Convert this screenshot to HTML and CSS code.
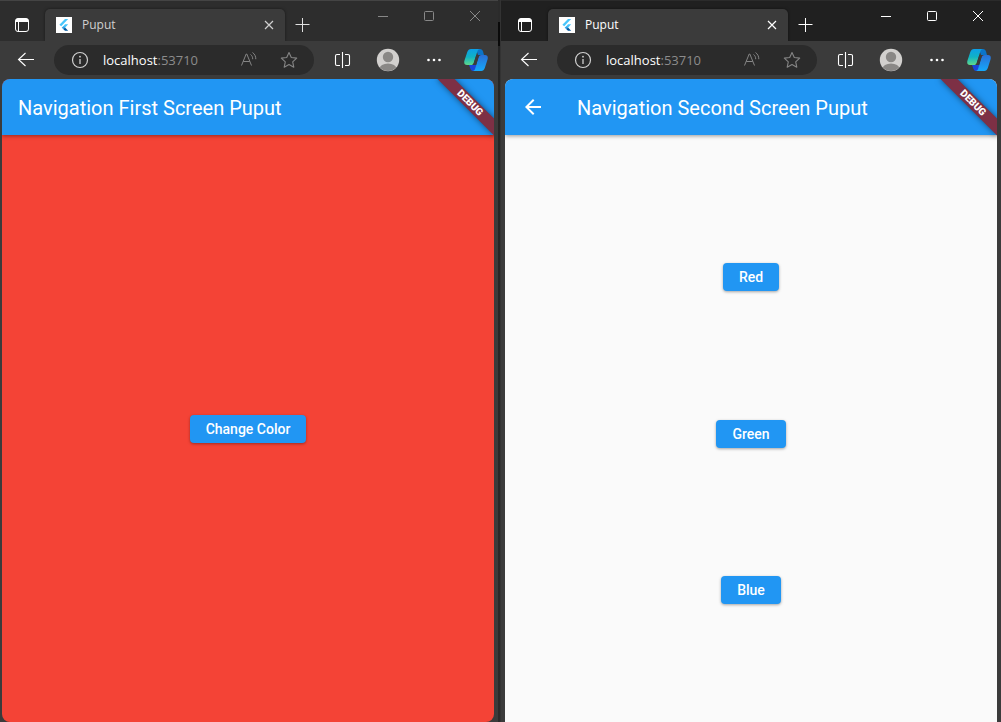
FILE: index.html
```html
<!DOCTYPE html>
<html lang="en">
<head>
<meta charset="utf-8">
<title>Puput</title>
<link rel="stylesheet" href="styles.css">
</head>
<body>
<svg class="sprite" aria-hidden="true">
  <defs>
    <linearGradient id="cp-left" x1="0" y1="0" x2="0" y2="1">
      <stop offset="0" stop-color="#0c9fe8"/><stop offset=".5" stop-color="#10b3c4"/><stop offset="1" stop-color="#5fd98a"/>
    </linearGradient>
    <linearGradient id="cp-right" x1="0" y1="0" x2="0" y2="1">
      <stop offset="0" stop-color="#2a6fd6"/><stop offset="1" stop-color="#14a9fb"/>
    </linearGradient>
    <symbol id="i-workspace" viewBox="0 0 16 16">
      <rect x="1.5" y="1.5" width="13" height="13" rx="2.5" fill="none" stroke="currentColor"/>
      <path d="M1.5 5V3.5a2 2 0 0 1 2-2h9a2 2 0 0 1 2 2V5z" fill="currentColor"/>
      <path d="M4.5 5v9.500" fill="none" stroke="currentColor"/>
    </symbol>
    <symbol id="i-flutter" viewBox="0 0 16 16">
      <path fill="#fff" d="M0 0h16v16H0z"/>
      <path fill="#47c5fb" d="M9 2h3.200L5.200 9.200 3.400 7.700z"/>
      <path fill="#47c5fb" d="M9 7.300h3.200L9 10.700 7.300 9.300z"/>
      <path fill="#2aa3e8" d="M5.700 10.700l1.700-1.600L9.200 10.700l-1.700 1.600z"/>
      <path fill="#00569e" d="M7.400 12.200L9 10.600l3.200 3.200H9z"/>
    </symbol>
    <symbol id="i-close" viewBox="0 0 12 12">
      <path d="M2 2l8 8M10 2l-8 8" fill="none" stroke="currentColor" stroke-width="1.200"/>
    </symbol>
    <symbol id="i-plus" viewBox="0 0 16 16">
      <path d="M8.500 1v14M1.500 7.500h14" fill="none" stroke="currentColor"/>
    </symbol>
    <symbol id="i-min" viewBox="0 0 12 12"><path d="M1 6.500h10" fill="none" stroke="currentColor"/></symbol>
    <symbol id="i-max" viewBox="0 0 12 12"><rect x="1.500" y="1.500" width="9" height="9" rx="1" fill="none" stroke="currentColor"/></symbol>
    <symbol id="i-exit" viewBox="0 0 12 12"><path d="M1 1l10 10M11 1L1 11" fill="none" stroke="currentColor"/></symbol>
    <symbol id="i-back" viewBox="0 0 18 16">
      <path d="M8.500 1L1.500 7.500l7 6.500M1.500 7.500H17" fill="none" stroke="currentColor" stroke-width="1.100"/>
    </symbol>
    <symbol id="i-info" viewBox="0 0 18 18">
      <circle cx="9" cy="9" r="7.500" fill="none" stroke="currentColor" stroke-width="1.200"/>
      <path d="M9 8v5" stroke="currentColor" stroke-width="1.300"/><circle cx="9" cy="5.700" r=".9" fill="currentColor"/>
    </symbol>
    <symbol id="i-read" viewBox="0 0 20 20">
      <path d="M2.500 15.500L7.200 4h.6l4.700 11.500M4.200 11.500h6.600M11.500 4.500c1.500 1 2.300 2.700 2.200 4.700M13.500 2.500c2.200 1.500 3.400 4 3.300 6.700" fill="none" stroke="currentColor"/>
    </symbol>
    <symbol id="i-star" viewBox="0 0 20 20">
      <path d="M10 2.500l2.300 5 5.400.6-4 3.700 1.100 5.400L10 14.500l-4.800 2.700 1.100-5.400-4-3.700 5.400-.6z" fill="none" stroke="currentColor" stroke-width="1.100" stroke-linejoin="round"/>
    </symbol>
    <symbol id="i-split" viewBox="0 0 17 16">
      <path d="M6 2.500H3A1.500 1.500 0 0 0 1.500 4v8A1.500 1.500 0 0 0 3 13.500h3M11 2.500h3A1.500 1.500 0 0 1 15.500 4v8a1.500 1.500 0 0 1-1.500 1.500h-3M8.500 0v16" fill="none" stroke="currentColor" stroke-width="1.100"/>
    </symbol>
    <symbol id="i-avatar" viewBox="0 0 24 24">
      <clipPath id="av-clip"><circle cx="12" cy="12" r="11"/></clipPath>
      <circle cx="12" cy="12" r="11.200" fill="#d2d0ce"/>
      <g clip-path="url(#av-clip)" fill="#8a8886"><circle cx="12" cy="9" r="5.200"/><ellipse cx="12" cy="21" rx="8.500" ry="5.500"/></g>
    </symbol>
    <symbol id="i-more" viewBox="0 0 16 16">
      <g fill="currentColor"><circle cx="2.500" cy="8" r="1.300"/><circle cx="8" cy="8" r="1.300"/><circle cx="13.500" cy="8" r="1.300"/></g>
    </symbol>
    <symbol id="i-copilot" viewBox="0 0 24 24">
      <path fill="#0b74c9" d="M12 1h4c1.600 0 2.500 1 3 2.500L20 7h-6z"/>
      <path fill="#1a45d8" d="M5 17h7l1 6H9c-1.500 0-2.200-1-2.600-2.200z"/>
      <path fill="url(#cp-left)" d="M7 1h9c-1.500 0-2.300 1-2.700 2.500L9.700 15c-.5 1.500-1.300 2-2.700 2H3c-2.400 0-3.200-1.700-2.600-4.200L3.300 4C4.100 2 5.200 1 7 1z"/>
      <path fill="url(#cp-right)" d="M17.500 7H21c2.400 0 3.200 1.700 2.600 4.200L20.800 20c-.8 2-1.700 3-3.500 3H8.500c1.500 0 2.300-1 2.700-2.500L14.500 9.500C15 7.800 16 7 17.500 7z"/>
      <path fill="#3b3b3b" d="M12.400 7h3.400c-.7.600-1.100 1.300-1.400 2.500L12 17H8.500c.6-.4 1-1 1.200-2z"/>
    </symbol>
    <symbol id="i-arrow" viewBox="0 0 24 24">
      <path fill="currentColor" d="M20 11H7.830l5.590-5.590L12 4l-8 8 8 8 1.410-1.410L7.830 13H20v-2z"/>
    </symbol>
  </defs>
</svg>
<div class="desktop">
  <section class="window window-inactive">
    <div class="tabstrip">
      <button class="workspace" aria-label="Workspaces"><svg class="s16"><use href="#i-workspace"/></svg></button>
      <div class="tab">
        <svg class="s16"><use href="#i-flutter"/></svg>
        <span class="tab-title">Puput</span>
        <button aria-label="Close tab"><svg class="s12"><use href="#i-close"/></svg></button>
      </div>
      <button class="new-tab" aria-label="New tab"><svg class="s16"><use href="#i-plus"/></svg></button>
      <div class="captions">
        <button aria-label="Minimize"><svg class="s12"><use href="#i-min"/></svg></button>
        <button aria-label="Maximize"><svg class="s12"><use href="#i-max"/></svg></button>
        <button aria-label="Close"><svg class="s12"><use href="#i-exit"/></svg></button>
      </div>
    </div>
    <div class="toolbar">
      <button class="back" aria-label="Back"><svg class="s18"><use href="#i-back"/></svg></button>
      <div class="address">
        <svg class="s18 info"><use href="#i-info"/></svg>
        <span class="url"><b>localhost</b>:53710</span>
        <button aria-label="Read aloud"><svg class="s20"><use href="#i-read"/></svg></button>
        <button aria-label="Add to favorites"><svg class="s20"><use href="#i-star"/></svg></button>
      </div>
      <div class="tools">
        <button aria-label="Split screen"><svg class="split"><use href="#i-split"/></svg></button>
        <button aria-label="Profile"><svg class="s24"><use href="#i-avatar"/></svg></button>
        <button aria-label="More"><svg class="s16"><use href="#i-more"/></svg></button>
        <button class="copilot" aria-label="Copilot"><svg class="s24"><use href="#i-copilot"/></svg></button>
      </div>
    </div>
    <main class="page page-red">
      <header class="appbar"><h1>Navigation First Screen Puput</h1></header>
      <div class="content">
        <button class="raised">Change Color</button>
      </div>
      <div class="debug">DEBUG</div>
    </main>
  </section>
  <div class="seam"></div>
  <section class="window window-active">
    <div class="tabstrip">
      <button class="workspace" aria-label="Workspaces"><svg class="s16"><use href="#i-workspace"/></svg></button>
      <div class="tab">
        <svg class="s16"><use href="#i-flutter"/></svg>
        <span class="tab-title">Puput</span>
        <button aria-label="Close tab"><svg class="s12"><use href="#i-close"/></svg></button>
      </div>
      <button class="new-tab" aria-label="New tab"><svg class="s16"><use href="#i-plus"/></svg></button>
      <div class="captions">
        <button aria-label="Minimize"><svg class="s12"><use href="#i-min"/></svg></button>
        <button aria-label="Maximize"><svg class="s12"><use href="#i-max"/></svg></button>
        <button aria-label="Close"><svg class="s12"><use href="#i-exit"/></svg></button>
      </div>
    </div>
    <div class="toolbar">
      <button class="back" aria-label="Back"><svg class="s18"><use href="#i-back"/></svg></button>
      <div class="address">
        <svg class="s18 info"><use href="#i-info"/></svg>
        <span class="url"><b>localhost</b>:53710</span>
        <button aria-label="Read aloud"><svg class="s20"><use href="#i-read"/></svg></button>
        <button aria-label="Add to favorites"><svg class="s20"><use href="#i-star"/></svg></button>
      </div>
      <div class="tools">
        <button aria-label="Split screen"><svg class="split"><use href="#i-split"/></svg></button>
        <button aria-label="Profile"><svg class="s24"><use href="#i-avatar"/></svg></button>
        <button aria-label="More"><svg class="s16"><use href="#i-more"/></svg></button>
        <button class="copilot" aria-label="Copilot"><svg class="s24"><use href="#i-copilot"/></svg></button>
      </div>
    </div>
    <main class="page page-light">
      <header class="appbar">
        <button class="nav-back" aria-label="Back"><svg class="s24"><use href="#i-arrow"/></svg></button>
        <h1>Navigation Second Screen Puput</h1>
      </header>
      <div class="content">
        <button class="raised">Red</button>
        <button class="raised">Green</button>
        <button class="raised">Blue</button>
      </div>
      <div class="debug">DEBUG</div>
    </main>
  </section>
</div>
</body>
</html>
```
FILE: styles.css
```css
* { box-sizing: border-box; }
body { margin: 0; background: #3b3b3b; }
button { border: 0; padding: 0; margin: 0; background: none; color: inherit; font: inherit; cursor: pointer; }
svg { display: block; flex: none; }
.sprite { position: absolute; width: 0; height: 0; }
.s12 { width: 12px; height: 12px; }
.s16 { width: 16px; height: 16px; }
.s18 { width: 18px; height: 18px; }
.s20 { width: 20px; height: 20px; }
.s24 { width: 24px; height: 24px; }
.split { width: 17px; height: 16px; }

.desktop { display: grid; grid-template-columns: 498fr 3px 500fr; height: 100vh; overflow: hidden; }
.seam { border-right: 1px solid #333; background: linear-gradient(#2b2b2b 22px, #0a0a0a 22px, #0a0a0a 46px, #252525 46px, #2b2b2b); }

.window { --edge: 4px; display: flex; flex-direction: column; min-width: 0; min-height: 0; background: #3b3b3b; font-family: "Open Sans", "Noto Sans", sans-serif; color: #fff; }
.window-inactive { --edge: 2px; }

.tabstrip { display: flex; flex: none; height: 41px; padding-left: var(--edge); background: #202020; border-top: 1px solid #2b2b2b; }
.window-inactive .tabstrip { background: #2d2d2d; border-top-color: #444; }
.workspace { display: grid; place-items: center; width: 40px; padding-top: 8px; margin-right: 3px; }
.tab { display: flex; align-items: center; gap: 10px; width: 240px; height: 32px; margin-top: 8px; padding: 0 10px 0 11px; border-radius: 5px 5px 0 0; background: #3b3b3b; box-shadow: 0 0 3px rgba(0, 0, 0, .5); clip-path: inset(-4px -4px 0 -4px); }
.tab-title { flex: 1; font-size: 12px; line-height: 16px; }
.window-inactive .tab { color: #d0d0d0; }
.new-tab { display: grid; place-items: center; width: 34px; padding-top: 8px; }
.window-inactive .new-tab { color: #e0e0e0; }
.captions { display: flex; margin-left: auto; height: 30px; }
.captions button { display: grid; place-items: center; width: 46px; }
.window-inactive .captions { color: #888; }

.toolbar { display: flex; flex: none; align-items: center; height: 38px; padding: 0 4px 0 var(--edge); }
.back { display: grid; place-items: center; width: 48px; height: 30px; margin-right: 4px; }
.address { display: flex; flex: 1; align-items: center; min-width: 0; height: 30px; padding: 0 15px 0 17px; border-radius: 15px; background: #2b2b2b; color: #858585; }
.info { margin-right: 14px; color: #d0d0d0; }
.url { flex: 1; font-size: 13px; line-height: 20px; color: #8c8c8c; }
.url b { font-weight: 400; color: #fff; }
.address button + button { margin-left: 20px; }
.tools { display: flex; margin-left: 5px; }
.tools button { display: grid; place-items: center; width: 46px; height: 30px; }
.tools .copilot { width: 37px; }

.page { position: relative; display: flex; flex: 1; flex-direction: column; min-height: 0; margin: 0 4px 0 var(--edge); overflow: hidden; font-family: Roboto, "Liberation Sans", sans-serif; }
.page-red { border-radius: 8px; background: #f44336; }
.page-light { margin-bottom: -10px; border-radius: 8px 8px 0 0; background: #fafafa; }
.appbar { display: flex; flex: none; align-items: center; height: 56px; padding: 0 16px; background: #2196f3; box-shadow: 0 1px 4px rgba(0, 0, 0, .4); }
.appbar h1 { margin: 0; padding-top: 2px; font-size: 20px; font-weight: 400; line-height: 24px; white-space: nowrap; }
.nav-back { width: 24px; margin-right: 32px; }
.content { display: flex; flex: 1; flex-direction: column; align-items: center; justify-content: space-evenly; }
.raised { height: 28px; padding: 0 16px; border-radius: 4px; background: #2196f3; font-size: 14px; font-weight: 500; line-height: 16px; box-shadow: 0 1px 3px rgba(0, 0, 0, .35); }
.debug { position: absolute; top: 18px; right: -16px; width: 80px; height: 12px; transform: rotate(45deg); background: #7d3045; box-shadow: 0 0 6px rgba(0, 0, 0, .5); font-size: 10px; font-weight: 900; line-height: 12px; text-align: center; }
```
